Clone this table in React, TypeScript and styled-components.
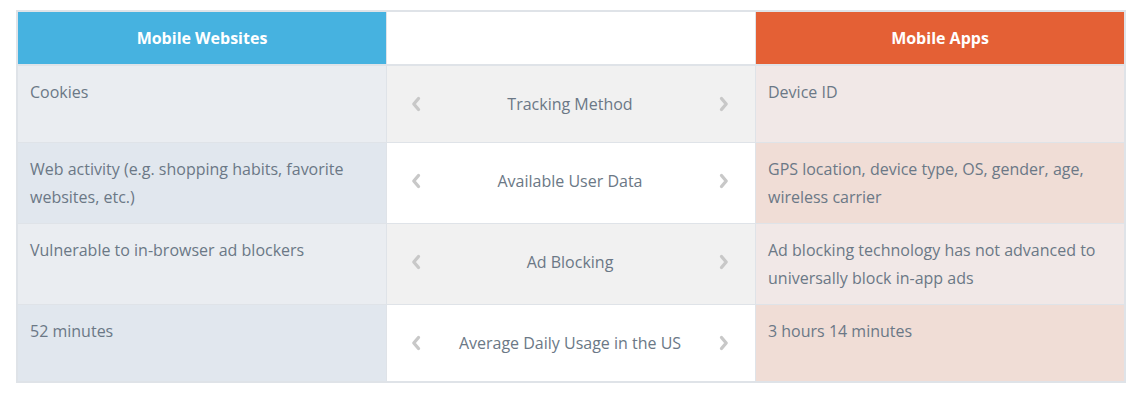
import React from 'react';
import styled, { createGlobalStyle } from 'styled-components';

const GlobalStyle = createGlobalStyle`
  body {
    margin: 0;
    background: #fff;
    font-family: 'Open Sans', 'Liberation Sans', sans-serif;
  }
`;

const Wrapper = styled.div`
  padding: 10px 15px 0 16px;
`;

const Table = styled.div`
  border: 2px solid #dfe3e8;
  background: #dfe3e8;
  display: grid;
  grid-template-columns: 1fr 1fr 1fr;
  column-gap: 1px;
  row-gap: 1px;
`;

const HeadCell = styled.div<{ bg: string }>`
  height: 52px;
  display: flex;
  align-items: center;
  justify-content: center;
  background: ${p => p.bg};
  color: #fff;
  font-weight: 700;
  font-size: 16px;
  margin-bottom: 1px;
`;

const SideCell = styled.div<{ bg: string }>`
  background: ${p => p.bg};
  color: #6b7886;
  font-size: 16px;
  line-height: 28px;
  padding: 12px 12px;
  min-height: 76px;
  box-sizing: border-box;
`;

const MidCell = styled.div<{ bg: string }>`
  background: ${p => p.bg};
  color: #6b7886;
  font-size: 16px;
  line-height: 28px;
  display: flex;
  align-items: flex-start;
  justify-content: space-between;
  padding: 24px 25px 24px 23px;
`;

const MidLabel = styled.span`
  flex: 1;
  text-align: center;
`;

const Arrow = styled.svg`
  width: 12px;
  height: 16px;
  margin-top: 6px;
  flex: none;
`;

const Chevron: React.FC<{ dir: 'left' | 'right' }> = ({ dir }) => (
  <Arrow viewBox="0 0 12 16">
    <path
      d={dir === 'left' ? 'M8.5 2.5 L3.8 8 L8.5 13.5' : 'M3.5 2.5 L8.2 8 L3.5 13.5'}
      fill="none"
      stroke="#c8c8c8"
      strokeWidth="3.3"
      strokeLinecap="round"
      strokeLinejoin="round"
    />
  </Arrow>
);

const rows = [
  { web: 'Cookies', label: 'Tracking Method', app: 'Device ID' },
  {
    web: 'Web activity (e.g. shopping habits, favorite websites, etc.)',
    label: 'Available User Data',
    app: 'GPS location, device type, OS, gender, age, wireless carrier'
  },
  {
    web: 'Vulnerable to in-browser ad blockers',
    label: 'Ad Blocking',
    app: 'Ad blocking technology has not advanced to universally block in-app ads'
  },
  { web: '52 minutes', label: 'Average Daily Usage in the US', app: '3 hours 14 minutes' }
];

const App: React.FC = () => (
  <Wrapper>
    <GlobalStyle />
    <Table>
      <HeadCell bg="#46b2e0">Mobile Websites</HeadCell>
      <HeadCell bg="#ffffff" />
      <HeadCell bg="#e46035">Mobile Apps</HeadCell>
      {rows.map((r, i) => {
        const odd = i % 2 === 0;
        return (
          <React.Fragment key={r.label}>
            <SideCell bg={odd ? '#eaedf1' : '#e1e7ee'}>{r.web}</SideCell>
            <MidCell bg={odd ? '#f1f1f1' : '#ffffff'}>
              <Chevron dir="left" />
              <MidLabel>{r.label}</MidLabel>
              <Chevron dir="right" />
            </MidCell>
            <SideCell bg={odd ? '#f1e8e7' : '#f0ddd6'}>{r.app}</SideCell>
          </React.Fragment>
        );
      })}
    </Table>
  </Wrapper>
);

export default App;
